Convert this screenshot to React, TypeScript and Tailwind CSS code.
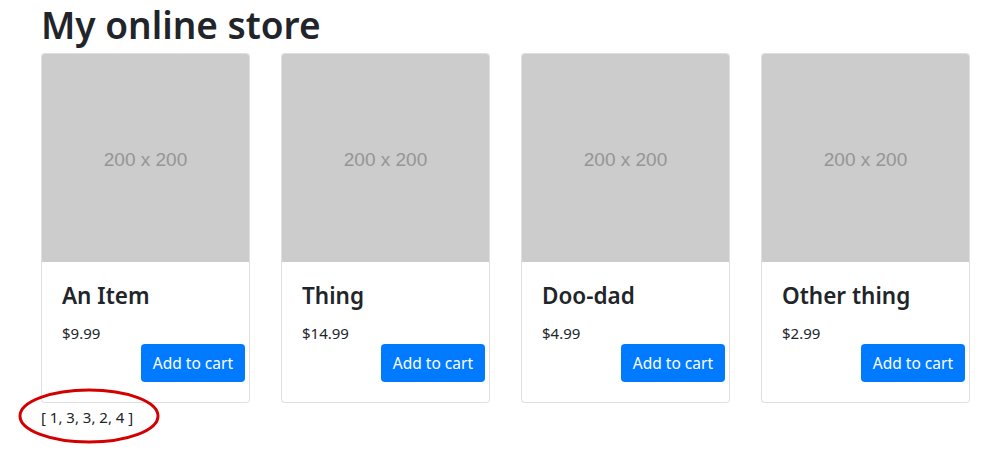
const items = [
  { name: "An Item", price: "$9.99" },
  { name: "Thing", price: "$14.99" },
  { name: "Doo-dad", price: "$4.99" },
  { name: "Other thing", price: "$2.99" },
];

function ProductCard({ name, price }: { name: string; price: string }) {
  return (
    <div className="w-[209px] rounded border border-black/[0.125] bg-white flex flex-col">
      <div className="h-[208px] w-full rounded-t-[3px] bg-[#cccccc] flex items-center justify-center pt-1">
        <span className="text-[19px] text-[#959595] font-['Liberation_Sans',Arial,sans-serif]">200 x 200</span>
      </div>
      <div className="flex flex-col p-5">
        <h3 className="text-[22.5px] leading-[28px] font-semibold text-[#212529] mb-3">{name}</h3>
        <p className="text-[15px] leading-[22px] text-[#212529]">{price}</p>
        <button className="self-end mr-[-16px] rounded bg-[#007bff] px-3 py-[7px] text-[15.5px] leading-6 text-white">
          Add to cart
        </button>
      </div>
    </div>
  );
}

export default function App() {
  return (
    <div className="min-h-screen bg-white font-['Noto_Sans','Open_Sans',sans-serif] text-[#212529]">
      <div className="pl-[41px] pt-[2px]">
        <h1 className="text-[37px] leading-[46px] font-semibold mb-[5px]">My online store</h1>
        <div className="flex gap-[31px]">
          {items.map((it) => (
            <ProductCard key={it.name} name={it.name} price={it.price} />
          ))}
        </div>
        <div className="relative mt-[3px] inline-block">
          <p className="text-[15px] leading-[22px] text-[#212529]">[ 1, 3, 3, 2, 4 ]</p>
          <svg
            className="absolute left-[-23px] top-[-18px] pointer-events-none"
            width="142"
            height="56"
            viewBox="0 0 142 56"
          >
            <ellipse cx="71" cy="28" rx="69" ry="26" fill="none" stroke="#d40000" strokeWidth="3" />
          </svg>
        </div>
      </div>
    </div>
  );
}
